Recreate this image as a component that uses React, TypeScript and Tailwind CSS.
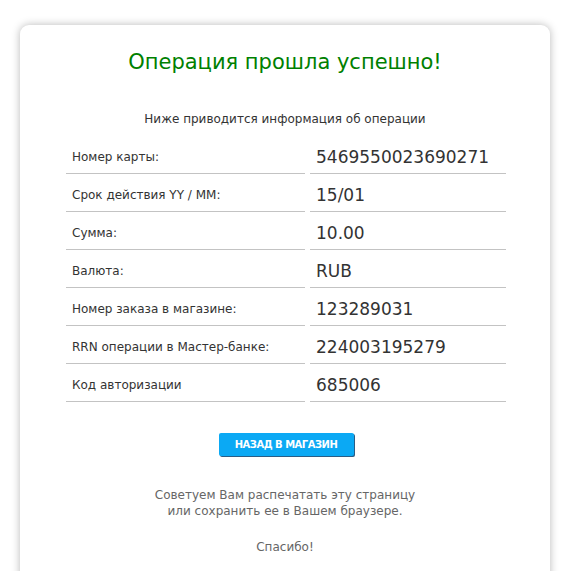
import React from 'react';

const rows: [string, string][] = [
  ['Номер карты:', '5469550023690271'],
  ['Срок действия YY / MM:', '15/01'],
  ['Сумма:', '10.00'],
  ['Валюта:', 'RUB'],
  ['Номер заказа в магазине:', '123289031'],
  ['RRN операции в Мастер-банке:', '224003195279'],
  ['Код авторизации', '685006'],
];

export default function App() {
  return (
    <div className="w-[573px] h-[571px] overflow-hidden bg-white font-['DejaVu_Sans',sans-serif]">
      <div className="ml-[20px] mt-[25px] w-[530px] h-[620px] bg-white rounded-t-[9px] shadow-[0_0_9px_rgba(0,0,0,0.28)] flex flex-col items-center pt-[23px]">
        <h1 className="text-[21px] leading-[28px] text-[#008000] font-normal">
          Операция прошла успешно!
        </h1>
        <p className="mt-[35px] text-[12px] leading-[16px] text-[#333]">
          Ниже приводится информация об операции
        </p>
        <div className="mt-[14px] ml-[2px] grid grid-cols-[239px_196px] gap-x-[5px] gap-y-[5px]">
          {rows.map(([label, value]) => (
            <React.Fragment key={label}>
              <div className="h-[33px] flex items-center px-[6px] border-b border-[#c3c3c3] text-[12px] text-[#333]">
                {label}
              </div>
              <div className="h-[33px] flex items-center px-[6px] border-b border-[#c3c3c3] text-[17px] text-[#333] pt-[2px]">
                {value}
              </div>
            </React.Fragment>
          ))}
        </div>
        <button className="mt-[31px] ml-[2px] w-[135px] h-[23px] rounded-[2px] bg-[#0ba9f4] text-white text-[10px] tracking-[-0.5px] font-bold shadow-[1px_1px_0_#2a5d85] flex items-center justify-center">
          НАЗАД В МАГАЗИН
        </button>
        <p className="mt-[31px] text-[12px] leading-[16px] text-[#666] text-center">
          Советуем Вам распечатать эту страницу
          <br />
          или сохранить ее в Вашем браузере.
        </p>
        <p className="mt-[20px] text-[12px] leading-[16px] text-[#666]">Спасибо!</p>
      </div>
    </div>
  );
}
